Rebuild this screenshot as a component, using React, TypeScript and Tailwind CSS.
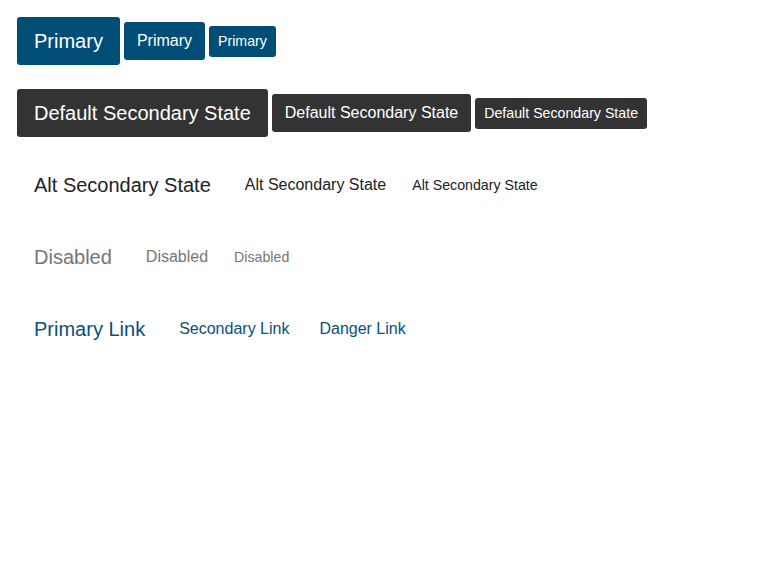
import React from 'react';

type Size = 'lg' | 'md' | 'sm';
type Variant = 'primary' | 'secondary' | 'alt' | 'disabled' | 'link';

const sizeClass: Record<Size, string> = {
  lg: 'h-12 px-[17px] text-[20px]',
  md: 'h-[38px] px-[13px] text-[16px]',
  sm: 'h-[31px] px-[9px] text-[14.2px]',
};

const variantClass: Record<Variant, string> = {
  primary: 'bg-[#004e75] text-white',
  secondary: 'bg-[#333333] text-white',
  alt: 'bg-transparent text-[#222222]',
  disabled: 'bg-transparent text-[#767676] cursor-not-allowed',
  link: 'bg-transparent text-[#0a5079]',
};

const Button: React.FC<{ size: Size; variant: Variant; children: React.ReactNode }> = ({
  size,
  variant,
  children,
}) => (
  <button
    disabled={variant === 'disabled'}
    className={`inline-flex items-center rounded-[3px] leading-none whitespace-nowrap ${sizeClass[size]} ${variantClass[variant]}`}
  >
    {children}
  </button>
);

const rows: { variant: Variant; labels: string[] }[] = [
  { variant: 'primary', labels: ['Primary', 'Primary', 'Primary'] },
  { variant: 'secondary', labels: ['Default Secondary State', 'Default Secondary State', 'Default Secondary State'] },
  { variant: 'alt', labels: ['Alt Secondary State', 'Alt Secondary State', 'Alt Secondary State'] },
  { variant: 'disabled', labels: ['Disabled', 'Disabled', 'Disabled'] },
];

const sizes: Size[] = ['lg', 'md', 'sm'];

export default function App() {
  return (
    <div
      className="min-h-screen bg-white px-[17px] py-[17px] flex flex-col gap-6"
      style={{ fontFamily: '"Liberation Sans", Arial, sans-serif' }}
    >
      {rows.map((row) => (
        <div key={row.variant} className="flex items-center gap-1 h-12">
          {row.labels.map((label, i) => (
            <Button key={i} size={sizes[i]} variant={row.variant}>
              {label}
            </Button>
          ))}
        </div>
      ))}

      {/* links */}
      <div className="flex items-center gap-1 h-12">
        <Button size="lg" variant="link">Primary Link</Button>
        <Button size="md" variant="link">Secondary Link</Button>
        <Button size="md" variant="link">Danger Link</Button>
      </div>
    </div>
  );
}
